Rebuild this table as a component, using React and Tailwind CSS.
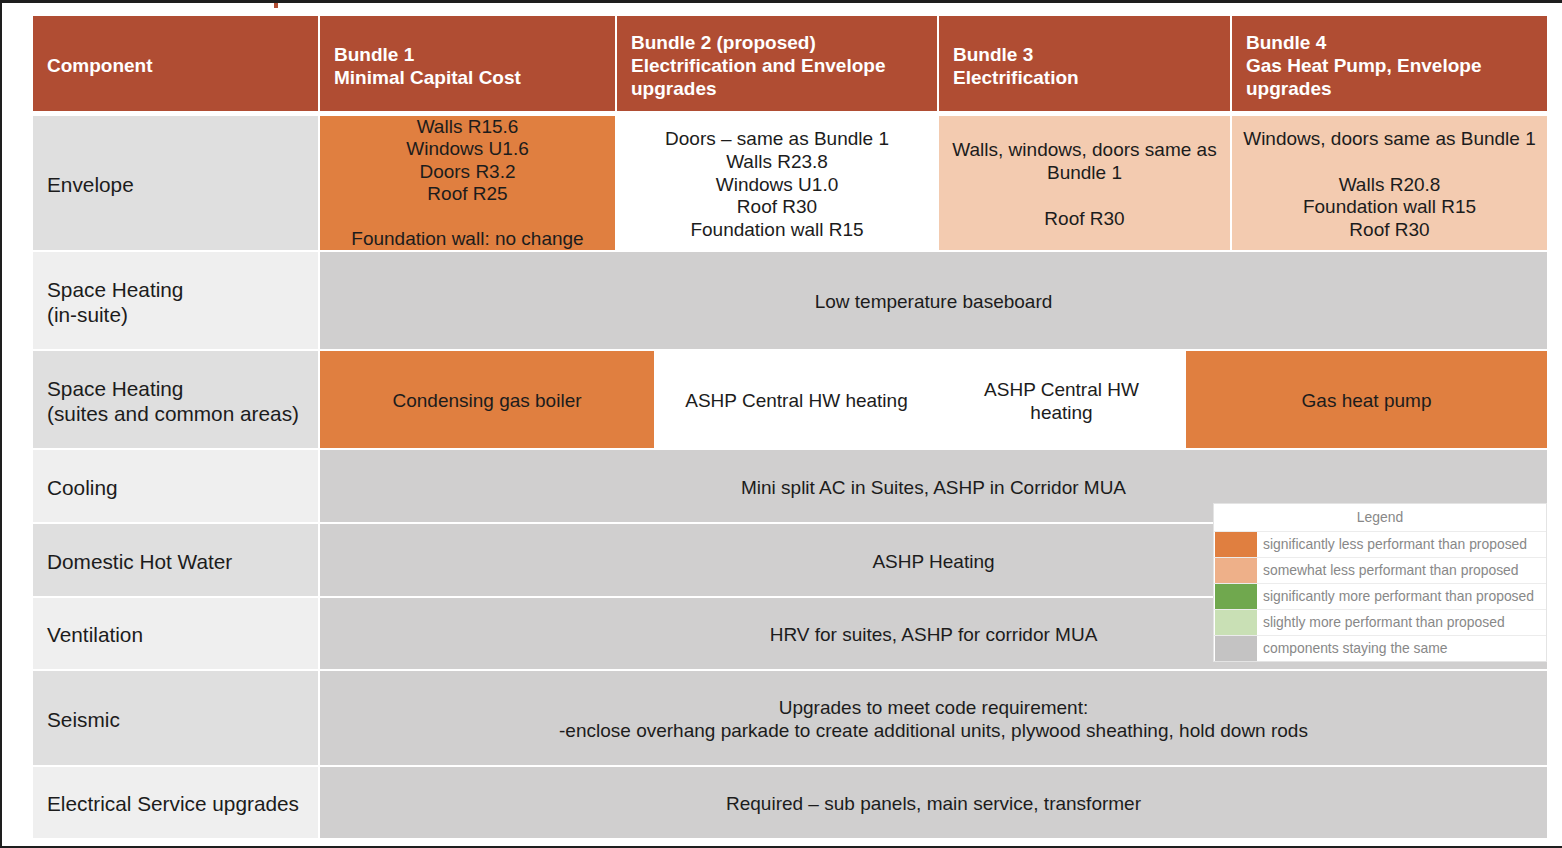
import React from "react";

const headers = [
  ["Component"],
  ["Bundle 1", "Minimal Capital Cost"],
  ["Bundle 2 (proposed)", "Electrification and Envelope", "upgrades"],
  ["Bundle 3", "Electrification"],
  ["Bundle 4", "Gas Heat Pump, Envelope", "upgrades"],
];

const legend = [
  ["bg-[#e07f40]", "significantly less performant than proposed"],
  ["bg-[#eeb089]", "somewhat less performant than proposed"],
  ["bg-[#70a84e]", "significantly more performant than proposed"],
  ["bg-[#c9e0b5]", "slightly more performant than proposed"],
  ["bg-[#c4c3c3]", "components staying the same"],
];

const Lines = ({ lines }) =>
  lines.map((l, i) => <div key={i}>{l === "" ? "\u00a0" : l}</div>);

const Label = ({ lines, dark }) => (
  <div
    className={`flex flex-col justify-center px-[14px] pt-[2px] text-[20.8px] leading-[25px] ${
      dark ? "bg-[#dfdfdf]" : "bg-[#efefef]"
    }`}
  >
    <Lines lines={lines} />
  </div>
);

const Cell = ({ lines, bg, pad = "pt-[4px]", lead = "leading-[22.8px]" }) => (
  <div
    className={`flex flex-col items-center justify-center overflow-hidden text-center ${pad} ${lead} ${bg}`}
  >
    <Lines lines={lines} />
  </div>
);

const SpanRow = ({ label, dark, lines, h }) => (
  <div className={`grid grid-cols-[285px_1fr] gap-x-[2px] ${h}`}>
    <Label lines={label} dark={dark} />
    <Cell lines={lines} bg="bg-[#d0cfcf]" />
  </div>
);

export default function App() {
  return (
    <div className="relative h-[848px] w-[1562px] overflow-hidden border-b-2 border-l-2 border-t-[3px] border-[#1e1e1e] bg-white font-['Liberation_Sans',Arial,sans-serif] text-[19px] text-[#1c1c1c]">
      <div className="ml-[272px] h-[5px] w-[4px] bg-[#b04d33]" />

      <div className="relative ml-[31px] mt-[8px] w-[1514px]">
        {/* header */}
        <div className="grid h-[95px] grid-cols-[285px_295px_320px_291px_315px] gap-x-[2px]">
          {headers.map((h, i) => (
            <div
              key={i}
              className="flex flex-col justify-center bg-[#b04d33] px-[14px] pt-[4px] font-bold leading-[23px] text-white"
            >
              <Lines lines={h} />
            </div>
          ))}
        </div>

        <div className="mt-[5px] flex flex-col gap-y-[2px]">
          {/* Envelope */}
          <div className="grid h-[134px] grid-cols-[285px_295px_320px_291px_315px] gap-x-[2px]">
            <Label lines={["Envelope"]} dark />
            <Cell
              bg="bg-[#e07f40]"
              pad="pt-0"
              lead="leading-[22.4px]"
              lines={["Walls R15.6", "Windows U1.6", "Doors R3.2", "Roof R25", "", "Foundation wall: no change"]}
            />
            <Cell
              bg="bg-white"
              lines={["Doors \u2013 same as Bundle 1", "Walls R23.8", "Windows U1.0", "Roof R30", "Foundation wall R15"]}
            />
            <Cell
              bg="bg-[#f3cbb0]"
              lines={["Walls, windows, doors same as", "Bundle 1", "", "Roof R30"]}
            />
            <Cell
              bg="bg-[#f3cbb0]"
              lines={["Windows, doors same as Bundle 1", "", "Walls R20.8", "Foundation wall R15", "Roof R30"]}
            />
          </div>

          <SpanRow
            h="h-[97px]"
            label={["Space Heating", "(in-suite)"]}
            lines={["Low temperature baseboard"]}
          />

          <div className="grid h-[97px] grid-cols-[285px_334px_281px_245px_361px] gap-x-[2px]">
            <Label lines={["Space Heating", "(suites and common areas)"]} dark />
            <Cell bg="bg-[#e07f40]" lines={["Condensing gas boiler"]} />
            <Cell bg="bg-white" lines={["ASHP Central HW heating"]} />
            <Cell bg="bg-white" lines={["ASHP Central HW", "heating"]} />
            <Cell bg="bg-[#e07f40]" lines={["Gas heat pump"]} />
          </div>

          <SpanRow
            h="h-[72px]"
            label={["Cooling"]}
            lines={["Mini split AC in Suites, ASHP in Corridor MUA"]}
          />
          <SpanRow h="h-[72px]" dark label={["Domestic Hot Water"]} lines={["ASHP Heating"]} />
          <SpanRow
            h="h-[71px]"
            label={["Ventilation"]}
            lines={["HRV for suites, ASHP for corridor MUA"]}
          />
          <SpanRow
            h="h-[94px]"
            dark
            label={["Seismic"]}
            lines={[
              "Upgrades to meet code requirement:",
              "-enclose overhang parkade to create additional units, plywood sheathing, hold down rods",
            ]}
          />
          <SpanRow
            h="h-[71px]"
            label={["Electrical Service upgrades"]}
            lines={["Required \u2013 sub panels, main service, transformer"]}
          />
        </div>

        {/* legend */}
        <div className="absolute left-[1180px] top-[487px] w-[334px] border border-[#e4e4e4] bg-white text-[13.9px] text-[#888]">
          <div className="flex h-[27px] items-center justify-center">Legend</div>
          {legend.map(([c, t], i) => (
            <div key={i} className="flex h-[26px] border-t border-[#ececec]">
              <div className={`ml-[1px] w-[42px] ${c}`} />
              <div className="flex items-center pl-[6px]">{t}</div>
            </div>
          ))}
        </div>
      </div>
    </div>
  );
}
